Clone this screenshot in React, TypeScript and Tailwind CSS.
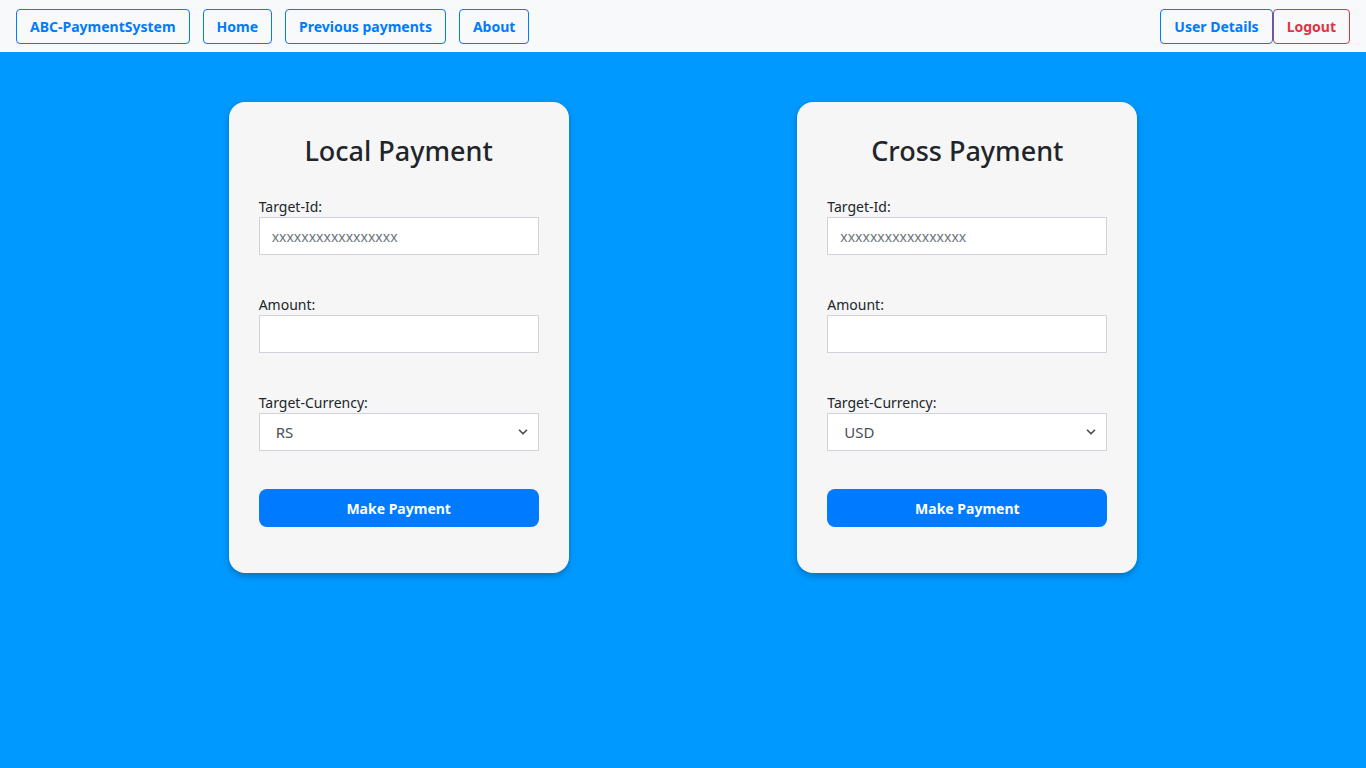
import { ChevronDown } from "lucide-react"

const font = { fontFamily: '"Noto Sans", "Open Sans", sans-serif' }

const NavButton = ({ children, red }: { children: string; red?: boolean }) => (
  <button
    className={
      "h-[35px] px-[13px] rounded-[4px] border bg-transparent text-[14px] font-bold leading-none " +
      (red ? "border-[#dc3545] text-[#dc3545]" : "border-[#007bff] text-[#007bff]")
    }
  >
    {children}
  </button>
)

const Field = ({ label, children }: { label: string; children: React.ReactNode }) => (
  <div className="flex flex-col">
    <label className="text-[14px] leading-[18px] text-[#212529] mb-[1px]">{label}</label>
    {children}
  </div>
)

const PaymentCard = ({ title, currency }: { title: string; currency: string }) => (
  <div className="w-[340px] bg-[#f6f6f6] rounded-[16px] shadow-[0_3px_6px_rgba(0,0,0,0.25)] px-[30px] pt-[30px] pb-[46px]">
    <h2 className="text-center text-[27px] leading-[38px] font-medium text-[#212529] mb-[28px]">{title}</h2>
    <div className="flex flex-col gap-[41px]">
      <Field label="Target-Id:">
        <input
          className="h-[38px] w-full border border-[#ced4da] bg-white px-3 text-[14px] placeholder:text-[#6c757d] outline-none"
          placeholder="xxxxxxxxxxxxxxxxx"
        />
      </Field>
      <Field label="Amount:">
        <input className="h-[38px] w-full border border-[#ced4da] bg-white px-3 text-[14px] outline-none" />
      </Field>
      <Field label="Target-Currency:">
        <div className="h-[38px] w-full border border-[#ced4da] bg-white flex items-center justify-between pl-[16px] pr-[8px]">
          <span className="text-[15px] text-[#495057]">{currency}</span>
          <ChevronDown size={14} strokeWidth={3} className="text-[#495057]" />
        </div>
      </Field>
    </div>
    <button className="mt-[38px] h-[38px] w-full rounded-[8px] bg-[#007bff] text-white text-[14px] font-bold">
      Make Payment
    </button>
  </div>
)

export default function App() {
  return (
    <div className="min-h-[768px] bg-[#0099ff] flex flex-col" style={font}>
      <nav className="h-[52px] bg-[#f8f9fa] flex items-start justify-between px-4 pt-[9px]">
        <div className="flex gap-[13px]">
          <NavButton>ABC-PaymentSystem</NavButton>
          <NavButton>Home</NavButton>
          <NavButton>Previous payments</NavButton>
          <NavButton>About</NavButton>
        </div>
        <div className="flex">
          <NavButton>User Details</NavButton>
          <NavButton red>Logout</NavButton>
        </div>
      </nav>
      <main className="flex justify-evenly items-start pt-[50px]">
        <PaymentCard title="Local Payment" currency="RS" />
        <PaymentCard title="Cross Payment" currency="USD" />
      </main>
    </div>
  )
}
